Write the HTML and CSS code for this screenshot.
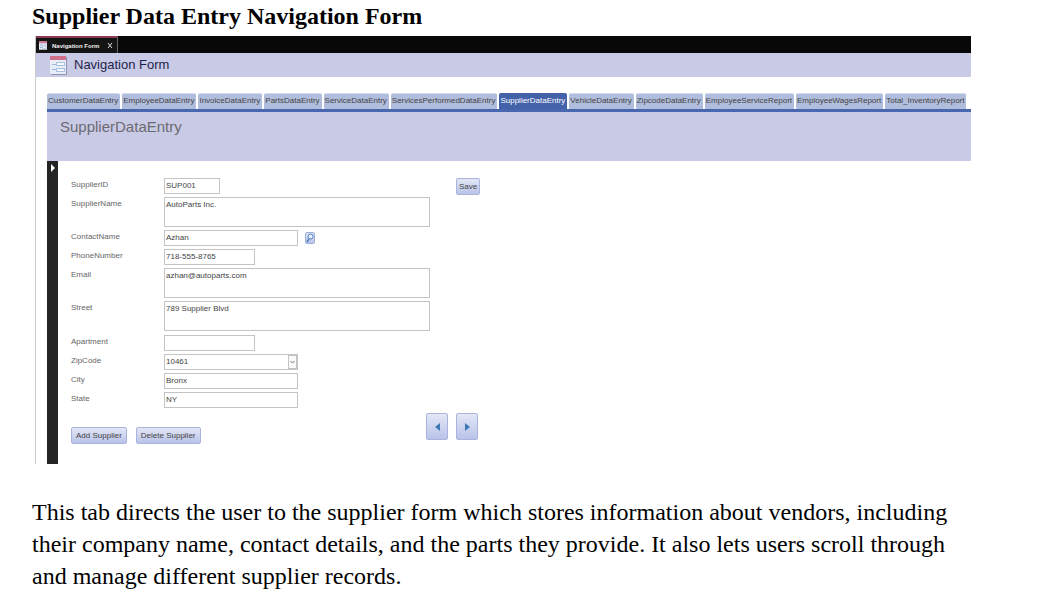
FILE: index.html
```html
<!DOCTYPE html>
<html lang="en">
<head>
<meta charset="utf-8">
<title>Supplier Data Entry Navigation Form</title>
<link rel="stylesheet" href="styles.css">
</head>
<body>
<main class="page">
  <h1 class="page-title">Supplier Data Entry Navigation Form</h1>
  <section class="window">
    <div class="window-tabs">
      <div class="window-tab">
        <svg class="tab-icon" viewBox="0 0 17 18" aria-hidden="true"><rect width="17" height="18" fill="#e6ebf5"/><rect width="17" height="4" fill="#cf6f8b"/><path d="M2 8h5M2 13h5" stroke="#8fa9d3" stroke-width="2"/><rect x="8" y="6" width="7" height="3" fill="#fff" stroke="#8fa9d3"/><rect x="8" y="12" width="7" height="3" fill="#fff" stroke="#8fa9d3"/></svg>
        <span>Navigation Form</span>
        <button class="close" type="button" aria-label="Close"><svg viewBox="0 0 6 7"><path d="M1 1l4 5M5 1L1 6" stroke="#ddd" fill="none"/></svg></button>
      </div>
    </div>
    <header class="form-header">
      <svg class="form-icon" viewBox="0 0 17 19" aria-hidden="true"><path d="M1 18.500H16.500V1" stroke="#8e94ad" fill="none"/><rect width="16" height="18" fill="#e8eef7"/><rect width="16" height="4" fill="#cf6f8b"/><path d="M2 8.500h4M2 13.500h4" stroke="#9db7dc"/><rect x="6.500" y="6.500" width="8" height="3" fill="#f6f9fd" stroke="#a9c0e0"/><rect x="6.500" y="12.500" width="8" height="3" fill="#f6f9fd" stroke="#a9c0e0"/></svg>
      <h2 class="form-title">Navigation Form</h2>
    </header>
    <div class="workspace">
      <nav class="tabs">
        <a class="tab" href="#customer">CustomerDataEntry</a>
        <a class="tab" href="#employee">EmployeeDataEntry</a>
        <a class="tab" href="#invoice">InvoiceDataEntry</a>
        <a class="tab" href="#parts">PartsDataEntry</a>
        <a class="tab" href="#service">ServiceDataEntry</a>
        <a class="tab" href="#performed">ServicesPerformedDataEntry</a>
        <a class="tab active" href="#supplier" aria-current="page">SupplierDataEntry</a>
        <a class="tab" href="#vehicle">VehicleDataEntry</a>
        <a class="tab" href="#zipcode">ZipcodeDataEntry</a>
        <a class="tab" href="#service-report">EmployeeServiceReport</a>
        <a class="tab" href="#wages-report">EmployeeWagesReport</a>
        <a class="tab" href="#inventory-report">Total_InventoryReport</a>
      </nav>
      <div class="subheader"><h3 class="subtitle">SupplierDataEntry</h3></div>
      <div class="record">
        <div class="selector"><svg viewBox="0 0 4 8" aria-hidden="true"><path d="M0 0l4 4-4 4z" fill="#fff"/></svg></div>
        <form class="form">
          <div class="fields">
            <div class="group">
              <label for="id">SupplierID</label><input class="w-id" id="id" value="SUP001">
              <label for="name">SupplierName</label><textarea id="name">AutoParts Inc.</textarea>
              <label for="contact">ContactName</label>
              <div class="lookup">
                <input class="w-mid" id="contact" value="Azhan">
                <button class="btn search" type="button" aria-label="Find contact"><svg viewBox="0 0 8 10"><circle cx="4.500" cy="3.500" r="2.500" fill="#eef6ff" stroke="#4a7fbd"/><path d="M3 6L1 9" stroke="#4a7fbd" stroke-width="1.500"/></svg></button>
              </div>
              <label for="phone">PhoneNumber</label><input class="w-short" id="phone" value="718-555-8765">
              <label for="email">Email</label><textarea id="email">azhan@autoparts.com</textarea>
              <label for="street">Street</label><textarea id="street">789 Supplier Blvd</textarea>
            </div>
            <div class="group">
              <label for="apartment">Apartment</label><input class="w-short" id="apartment">
              <label for="zip">ZipCode</label>
              <div class="combo w-mid">
                <select id="zip"><option>10461</option></select>
                <svg class="combo-arrow" viewBox="0 0 9 14" aria-hidden="true"><rect x=".5" y=".5" width="8" height="13" fill="#fafafa" stroke="#c4c4c4"/><path d="M2.500 6l2 2 2-2" fill="none" stroke="#777"/></svg>
              </div>
              <label for="city">City</label><input class="w-mid" id="city" value="Bronx">
              <label for="state">State</label><input class="w-mid" id="state" value="NY">
            </div>
            <div class="actions">
              <button class="btn" type="button">Add Supplier</button>
              <button class="btn" type="button">Delete Supplier</button>
            </div>
          </div>
          <div class="side">
            <button class="btn save" type="button">Save</button>
            <div class="pager">
              <button class="btn step" type="button" aria-label="Previous record"><svg viewBox="0 0 5 8"><path d="M5 0v8L0 4z" fill="#3f7ab5"/></svg></button>
              <button class="btn step" type="button" aria-label="Next record"><svg viewBox="0 0 5 8"><path d="M0 0v8l5-4z" fill="#3f7ab5"/></svg></button>
            </div>
          </div>
        </form>
      </div>
    </div>
  </section>
  <p class="description">This tab directs the user to the supplier form which stores information about vendors, including their company name, contact details, and the parts they provide. It also lets users scroll through and manage different supplier records.</p>
</main>
</body>
</html>
```
FILE: styles.css
```css
* { box-sizing: border-box; }
body { margin: 0; background: #fff; color: #000; font-family: "Liberation Serif", "Times New Roman", serif; }
.page { padding: 2px 82px 0 32px; }
.page-title { margin: 0; font-size: 24px; line-height: 28px; font-weight: 700; }
.window {
  margin: 6px 0 0 3px;
  border-left: 1px solid #c8c8c8;
  font-family: "Liberation Sans", Arial, sans-serif;
  font-size: 8px;
  line-height: 12px;
}
.window svg { display: block; }
.window-tabs { display: flex; height: 17px; background: #080808; }
.window-tab { display: flex; align-items: center; gap: 5px; padding: 0 4px 0 3px; border-top: 2px solid #8c3a4d; border-right: 1px solid #666; background: #141414; color: #f0f0f0; font-size: 6px; font-weight: 700; }
.tab-icon { width: 8px; height: 9px; }
.close { margin-left: 3px; padding: 0; border: 0; background: none; }
.close svg { width: 6px; height: 7px; }
.form-header { display: flex; align-items: center; gap: 7px; height: 24px; padding-left: 14px; background: #c9cae6; }
.form-icon { width: 17px; height: 19px; }
.form-title { margin: 0; color: #1e1e4b; font-size: 13px; line-height: 20px; font-weight: 400; }
.workspace { padding: 16px 0 0 11px; }
.tabs { display: flex; gap: 2px; border-bottom: 3px solid #4867ae; }
.tab { padding: 1px 2px 2px 1px; border-top: 1px solid #d5daec; border-radius: 2px 2px 0 0; background: #b1bddc; color: #444; text-decoration: none; white-space: nowrap; }
.tab.active { border-color: #4462aa; background: #4462aa; color: #fff; }
.subheader { height: 49px; padding: 4px 13px; background: #c9cae6; }
.subtitle { margin: 0; color: #6b6b70; font-size: 15px; line-height: 22px; font-weight: 400; }
.record { display: flex; }
.selector { flex: none; width: 11px; padding: 3px 0 0 4px; background: #242424; }
.selector svg { width: 4px; height: 8px; }
.form { display: flex; gap: 26px; padding: 17px 12px 20px 13px; color: #666; }
.group { display: grid; grid-template-columns: 93px auto; gap: 3px 0; margin-bottom: 4px; justify-items: start; }
.group label { line-height: 14px; }
input, textarea, select { display: block; margin: 0; height: 16px; padding: 0 1px 2px; border: 1px solid #c4c4c4; border-radius: 0; background: #fff; color: #444; font: inherit; }
textarea { width: 266px; height: 30px; padding-top: 1px; resize: none; overflow: hidden; }
select { width: 100%; padding-top: 1px; appearance: none; }
.w-id { width: 56px; }
.w-short { width: 91px; }
.w-mid { width: 134px; }
.lookup { display: flex; align-items: center; gap: 7px; }
.combo { position: relative; }
.combo-arrow { position: absolute; right: 1px; top: 1px; width: 9px; height: 14px; pointer-events: none; }
.btn { height: 17px; padding: 0 4px; border: 1px solid #a9b4dc; border-radius: 2px; background: linear-gradient(#e3e7f6, #b8c3e8); color: #444; font: inherit; }
.search { height: 12px; padding: 0; border-color: #9daed9; }
.search svg { width: 8px; height: 10px; }
.actions { display: flex; gap: 9px; padding-top: 15px; }
.side { display: flex; flex-direction: column; justify-content: space-between; align-items: flex-start; margin-left: -30px; }
.save { margin-left: 30px; padding: 0 2px; }
.pager { display: flex; gap: 8px; margin-bottom: 4px; }
.step { width: 22px; height: 27px; padding: 0 8px; }
.step svg { width: 5px; height: 8px; }
.description { margin: 32px 0 0; font-size: 24px; line-height: 32px; }
```
